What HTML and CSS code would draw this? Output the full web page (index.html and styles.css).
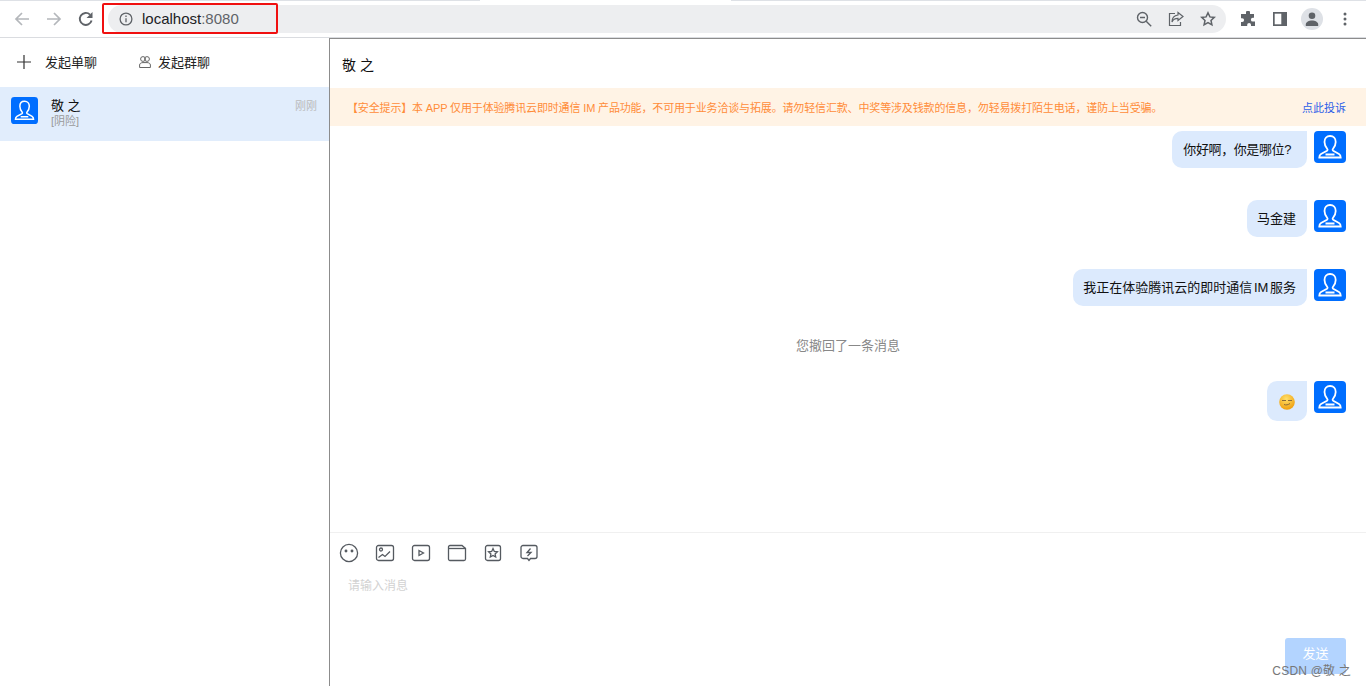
FILE: index.html
```html
<!DOCTYPE html>
<html>
<head>
    <meta charset="utf-8">
    <title>localhost:8080</title>
    <link rel="stylesheet" href="styles.css">
</head>
<body>
    <div class="toolbar">
        <svg class="nav_icon" width="16" height="16" viewBox="0 0 16 16" fill="none" stroke="#b4b7bb" stroke-width="1.7"><path d="M15 8H2M8 2L2 8l6 6"/></svg>
        <svg class="nav_icon" width="16" height="16" viewBox="0 0 16 16" fill="none" stroke="#b4b7bb" stroke-width="1.7"><path d="M1 8h13M8 2l6 6-6 6"/></svg>
        <svg class="nav_icon" width="16" height="16" viewBox="0 0 16 16" fill="none" stroke="#5f6368" stroke-width="1.9"><path d="M13.6 9.5A6 6 0 1 1 12 3.6"/><path d="M14.5 1v6h-6z" fill="#5f6368" stroke="none"/></svg>
        <div class="omnibox">
            <div class="url_mark"></div>
            <svg class="info_icon" width="14" height="14" viewBox="0 0 14 14" fill="none" stroke="#5f6368" stroke-width="1.3"><circle cx="7" cy="7" r="5.9"/><path d="M7 6.2v4M7 3.6v1.4"/></svg>
            <span class="url_host">localhost</span><span class="url_port">:8080</span>
            <div class="omnibox_right">
                <svg width="16" height="16" viewBox="0 0 16 16" fill="none" stroke="#5f6368" stroke-width="1.4"><circle cx="6.5" cy="6.5" r="5"/><path d="M4 6.5h5M10.2 10.2l5 5"/></svg>
                <svg width="16" height="16" viewBox="0 0 16 16" fill="none" stroke="#5f6368" stroke-width="1.2"><path d="M7 2.5H1.5v12h11V11"/><path d="M10 1.5l5 4-5 4V7.3C7 7.3 5 8.400 4 11c0-4 2-6.500 6-7z"/></svg>
                <svg width="16" height="16" viewBox="0 0 16 16" fill="none" stroke="#5f6368" stroke-width="1.5"><path d="M8 1.800l1.900 4.100 4.400.5-3.300 3 .9 4.400L8 11.600l-3.900 2.200.9-4.400-3.300-3 4.400-.5z"/></svg>
            </div>
        </div>
        <svg class="ext_icon" width="16" height="16" viewBox="0 0 16 16" fill="#5f6368"><path d="M6 1.500a2 2 0 0 1 4 0V3h4v3.800h-1.200a1.900 1.900 0 0 0 0 3.800H15V15h-4v-1.200a1.900 1.900 0 0 0-3.800 0V15H1v-4h1.200a1.900 1.900 0 0 0 0-3.800H1V3h5z"/></svg>
        <svg class="side_icon" width="14" height="14" viewBox="0 0 14 14"><rect width="14" height="14" fill="#5f6368"/><rect x="1.700" y="1.700" width="6.600" height="10.600" fill="#fff"/></svg>
        <div class="avatar_chip">
            <svg width="14" height="14" viewBox="0 0 14 14" fill="#5f6368"><circle cx="7" cy="3.800" r="3.300"/><path d="M.8 14v-1.500C.8 10 4 8.500 7 8.500s6.200 1.500 6.200 4V14z"/></svg>
        </div>
        <svg class="more_icon" width="4" height="14" viewBox="0 0 4 14" fill="#5f6368"><circle cx="2" cy="2" r="1.500"/><circle cx="2" cy="7" r="1.500"/><circle cx="2" cy="12" r="1.500"/></svg>
    </div>

    <div class="app">
        <div class="side">
            <div class="side_head">
                <div class="side_btn first">
                    <svg width="14" height="14" viewBox="0 0 14 14" stroke="#333" stroke-width="1.200"><path d="M7 0v14M0 7h14"/></svg>
                    <span>发起单聊</span>
                </div>
                <div class="side_btn">
                    <svg width="12" height="12" viewBox="0 0 12 12" fill="none" stroke="#666" stroke-width="1"><circle cx="4" cy="3" r="2.400"/><circle cx="8" cy="3" r="2.400"/><path d="M.6 11.500V9c0-1.500 1.500-2.400 3.400-2.400h4c1.900 0 3.400.9 3.400 2.400v2.500z"/></svg>
                    <span>发起群聊</span>
                </div>
            </div>
            <div class="conv">
                <svg class="avatar small" viewBox="0 0 32 32"><use href="#user"/></svg>
                <div class="conv_text">
                    <div class="conv_name">敬 之</div>
                    <div class="conv_last">[阴险]</div>
                </div>
                <div class="conv_time">刚刚</div>
            </div>
        </div>

        <div class="main">
            <div class="chat_title">敬 之</div>
            <div class="notice">
                <span class="notice_text">【安全提示】本 APP 仅用于体验腾讯云即时通信 IM 产品功能，不可用于业务洽谈与拓展。请勿轻信汇款、中奖等涉及钱款的信息，勿轻易拨打陌生电话，谨防上当受骗。</span>
                <span class="notice_link">点此投诉</span>
            </div>
            <div class="messages">
                <div class="msg msg1">
                    <div class="bubble">你好啊，你是哪位?</div>
                    <svg class="avatar" viewBox="0 0 32 32"><use href="#user"/></svg>
                </div>
                <div class="msg msg2">
                    <div class="bubble">马金建</div>
                    <svg class="avatar" viewBox="0 0 32 32"><use href="#user"/></svg>
                </div>
                <div class="msg msg3">
                    <div class="bubble">我正在体验腾讯云的即时通信 IM 服务</div>
                    <svg class="avatar" viewBox="0 0 32 32"><use href="#user"/></svg>
                </div>
                <div class="revoked">您撤回了一条消息</div>
                <div class="msg">
                    <div class="bubble emoji_bubble">
                        <svg width="16" height="16" viewBox="0 0 16 16"><defs><radialGradient id="face" cx="45%" cy="30%" r="75%"><stop offset="0" stop-color="#ffe06a"/><stop offset="1" stop-color="#ee9a08"/></radialGradient></defs><circle cx="8" cy="8" r="7.800" fill="url(#face)"/><path d="M3 6.500h4M9 6.500h4M5 10.500c2 .8 4 .5 6-1" fill="none" stroke="#8a6a3a" stroke-width="1"/></svg>
                    </div>
                    <svg class="avatar" viewBox="0 0 32 32"><use href="#user"/></svg>
                </div>
            </div>
            <div class="editor">
                <div class="tools">
                    <svg width="20" height="20" viewBox="0 0 20 20" fill="none" stroke="#555a60" stroke-width="1.300"><circle cx="10" cy="10" r="8.600"/><circle cx="7" cy="8" r=".8" fill="#555a60"/><circle cx="13" cy="8" r=".8" fill="#555a60"/></svg>
                    <svg width="20" height="20" viewBox="0 0 20 20" fill="none" stroke="#555a60" stroke-width="1.300"><rect x="1.500" y="2.500" width="17" height="15" rx="2"/><circle cx="6" cy="6.500" r="1.500"/><path d="M3.500 14.500l4-3 2.500 2 5-5"/></svg>
                    <svg width="20" height="20" viewBox="0 0 20 20" fill="none" stroke="#555a60" stroke-width="1.300"><rect x="1.500" y="2.500" width="17" height="15" rx="2"/><path d="M8 7.500l4.500 2.500L8 12.500z"/></svg>
                    <svg width="20" height="20" viewBox="0 0 20 20" fill="none" stroke="#555a60" stroke-width="1.300"><path d="M1.500 4a1.500 1.500 0 0 1 1.500-1.500h12l3 2.500h.2a.8.8 0 0 1 .3 1V16a1.500 1.500 0 0 1-1.500 1.500H3A1.500 1.500 0 0 1 1.500 16z"/><path d="M1.500 5.500H18"/></svg>
                    <svg width="20" height="20" viewBox="0 0 20 20" fill="none" stroke="#555a60" stroke-width="1.300"><rect x="2.500" y="2.500" width="15" height="15" rx="2"/><path d="M10 5.500l1.300 2.900 3.100.4-2.300 2.100.6 3.100L10 12.500l-2.700 1.500.6-3.100-2.300-2.100 3.100-.4z"/></svg>
                    <svg width="20" height="20" viewBox="0 0 20 20" fill="none" stroke="#555a60" stroke-width="1.300"><path d="M4 2.500h12A2 2 0 0 1 18 4.500v9a2 2 0 0 1-2 2h-4.500L10 17.500l-1.500-2H4a2 2 0 0 1-2-2v-9a2 2 0 0 1 2-2z"/><path d="M11.500 5.500L8 9.500h4l-3.500 3.500"/></svg>
                </div>
                <div class="placeholder">请输入消息</div>
                <div class="send_row"><div class="send">发送</div></div>
                <div class="watermark">CSDN @敬 之</div>
            </div>
        </div>
    </div>

    <svg class="defs" width="0" height="0">
        <symbol id="user" viewBox="0 0 32 32">
            <rect width="32" height="32" rx="4" fill="#006eff"/>
            <path d="M16 5c-3.300 0-5.500 2.500-5.500 6 0 3 1.500 5.500 2.800 7 .5.6.3 1.300-.3 1.700L7 23c-1.200.7-1.700 1.500-1.700 3.500h21.400c0-2-.5-2.800-1.700-3.500l-5.800-3.300c-.6-.4-.8-1.100-.3-1.700 1.300-1.500 2.800-4 2.800-7 0-3.500-2.200-6-5.500-6zM11.500 23.500h9" fill="none" stroke="#fff" stroke-width="1.800"/>
        </symbol>
    </svg>
</body>
</html>
```

FILE: styles.css
```css
* {
    box-sizing: border-box;
    font-family: "Liberation Sans", "Noto Sans CJK SC", sans-serif;
}
html, body {
    height: 100%;
}
body {
    margin: 0;
    overflow: hidden;
    background: #fff;
    color: #111;
    display: flex;
    flex-direction: column;
}
.defs {
    position: absolute;
}

/* browser bar */
.toolbar {
    height: 38px;
    flex: none;
    display: flex;
    align-items: center;
    padding-left: 14px;
    background: #fff;
    border-bottom: 1px solid #dadce0;
    position: relative;
}
.toolbar:before {
    content: "";
    position: absolute;
    left: 0;
    right: 0;
    top: 0;
    height: 1px;
    background: linear-gradient(to right, #dee1e6 480px, #fff 480px, #fff 731px, #dee1e6 731px);
}
.nav_icon {
    margin-right: 16px;
}
.omnibox {
    width: 1118px;
    height: 28px;
    margin-left: -2px;
    margin-right: 14px;
    border-radius: 14px;
    background: #edeef0;
    display: flex;
    align-items: center;
    padding-left: 11px;
    font-size: 15px;
    position: relative;
}
.url_mark {
    position: absolute;
    left: -6px;
    top: -2px;
    width: 176px;
    height: 31px;
    border: 2px solid #f01010;
    border-radius: 2px;
}
.info_icon {
    margin-right: 9px;
}
.url_host {
    color: #202124;
}
.url_port {
    color: #5f6368;
}
.omnibox_right {
    margin-left: auto;
    display: flex;
    gap: 16px;
    padding-right: 10px;
}
.ext_icon {
    margin-right: 17px;
}
.side_icon {
    margin-right: 14px;
}
.avatar_chip {
    width: 22px;
    height: 22px;
    border-radius: 50%;
    background: #dee1e6;
    display: flex;
    align-items: center;
    justify-content: center;
    margin-right: 20px;
}

/* app */
.app {
    flex: 1;
    display: flex;
    min-height: 0;
}
.side {
    width: 329px;
    flex: none;
}
.side_head {
    height: 49px;
    display: flex;
    align-items: center;
    font-size: 13px;
    padding-left: 17px;
    padding-bottom: 2px;
    color: #222;
}
.side_btn {
    display: flex;
    align-items: center;
    gap: 7px;
}
.side_btn.first {
    gap: 14px;
    width: 122px;
}
.conv {
    height: 54px;
    background: #e1edfc;
    display: flex;
    padding: 10px 12px 0 11px;
}
.avatar {
    width: 32px;
    height: 32px;
    flex: none;
    display: block;
}
.avatar.small {
    width: 27px;
    height: 27px;
}
.conv_text {
    margin-left: 13px;
    padding-top: 1px;
    flex: 1;
}
.conv_name {
    font-size: 13px;
    line-height: 16px;
}
.conv_last {
    font-size: 11px;
    line-height: 15px;
    color: #999;
}
.conv_time {
    font-size: 11px;
    color: #bbb;
    line-height: 16px;
    padding-top: 1px;
}
.main {
    flex: 1;
    min-width: 0;
    border-left: 1px solid #8c8c8c;
    border-top: 1px solid #8c8c8c;
    display: flex;
    flex-direction: column;
}
.chat_title {
    height: 49px;
    padding: 18px 0 0 12px;
    font-size: 14px;
    line-height: 16px;
}
.notice {
    height: 38px;
    background: #fff3e5;
    color: #ff8c39;
    font-size: 11px;
    display: flex;
    align-items: center;
    justify-content: space-between;
    padding: 0 20px 0 17px;
}
.notice_text {
    letter-spacing: -0.15px;
}
.notice_link {
    color: #2f5fe8;
}
.messages {
    height: 406px;
    flex: none;
    padding: 5px 20px 0 0;
}
.msg {
    display: flex;
    justify-content: flex-end;
    gap: 7px;
}
.msg1, .msg2, .msg3 {
    margin-bottom: 32px;
}
.bubble {
    background: #dceafd;
    font-size: 13px;
    line-height: 15px;
    padding: 11px 11px 11px 10px;
    border-radius: 10px 0 10px 10px;
    height: 37px;
    word-spacing: -2px;
}
.msg1 .bubble {
    letter-spacing: -0.4px;
    padding: 11px 16px 11px 11px;
}
.emoji_bubble {
    height: 40px;
    width: 40px;
    padding: 13px 0 0 12px;
}
.revoked {
    font-size: 13px;
    color: #888;
    text-align: center;
    line-height: 16px;
    margin: 1px -20px 27px 0;
}
.editor {
    flex: 1;
    border-top: 1px solid #f0f0f0;
    position: relative;
    min-height: 0;
}
.tools {
    display: flex;
    gap: 16px;
    padding: 10px 0 0 9px;
}
.tools svg {
    display: block;
}
.placeholder {
    font-size: 12px;
    color: #d2d2d2;
    padding: 15px 0 0 18px;
    line-height: 16px;
}
.send_row {
    display: flex;
    justify-content: flex-end;
    padding: 44px 20px 0 0;
}
.send {
    width: 61px;
    height: 36px;
    background: #b3d4ff;
    color: #fff;
    font-size: 13px;
    text-align: center;
    line-height: 32px;
    border-radius: 3px;
}
.watermark {
    position: absolute;
    right: 15px;
    bottom: 8px;
    font-size: 12px;
    letter-spacing: 0.2px;
    color: #777;
}
```
